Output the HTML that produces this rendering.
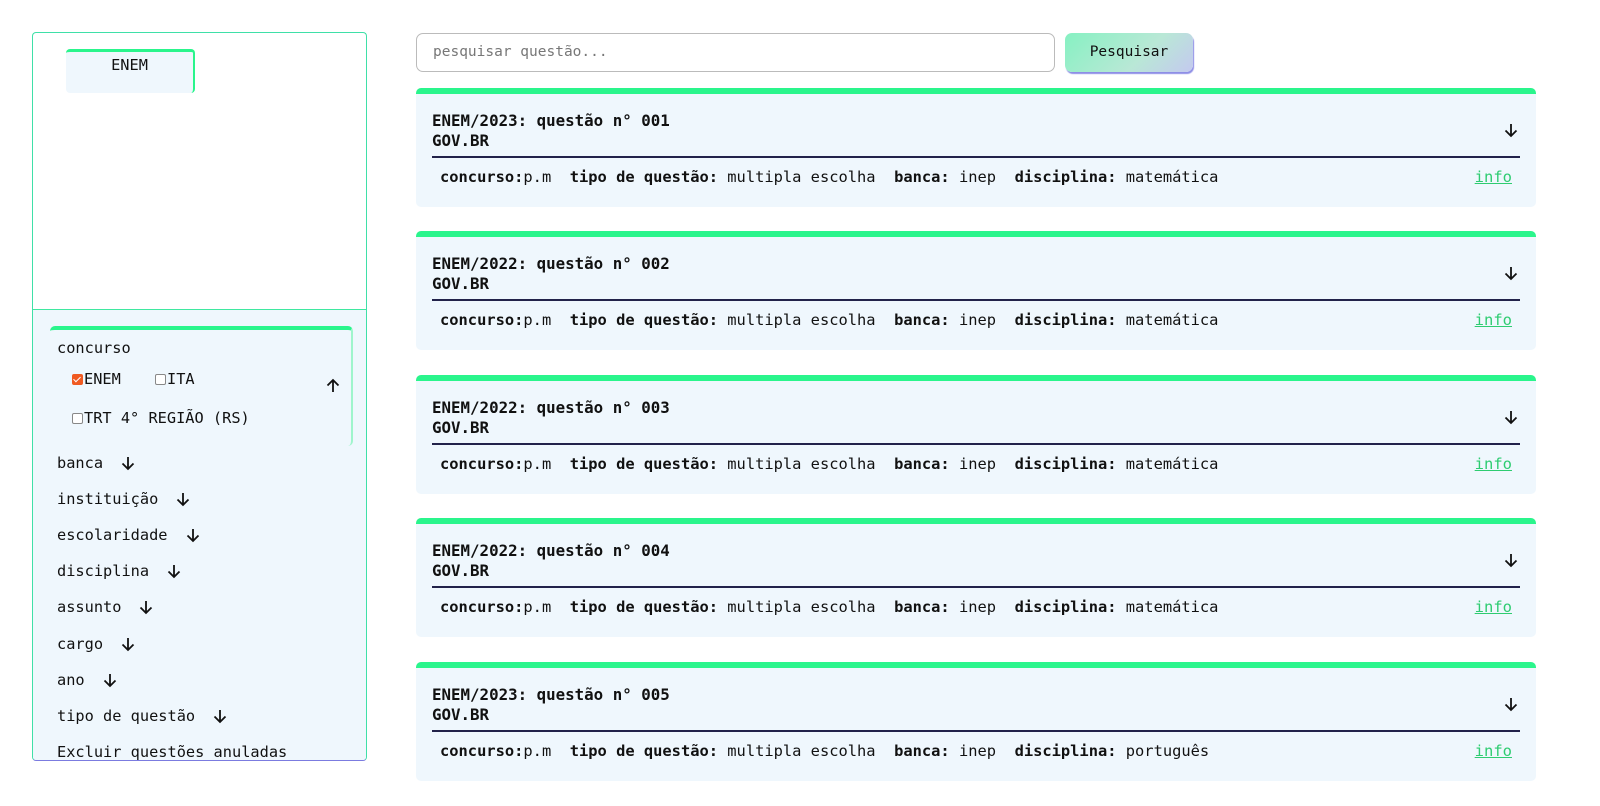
<!DOCTYPE html>
<html><head><meta charset="utf-8">
<style>
*{box-sizing:border-box;margin:0;padding:0}
body{width:1600px;height:806px;background:#fff;font-family:"DejaVu Sans Mono","Liberation Mono",monospace;color:#111;position:relative;overflow:hidden}
.side{position:absolute;left:32px;top:32px;width:335px;height:729px;border:1.5px solid #3fe0a8;border-bottom-color:#7b7be0;border-radius:4px;overflow:hidden}
.side .low{position:absolute;left:0;right:0;top:276px;bottom:0;background:#eff7fd;border-top:1.5px solid #3fe8a0}
.tab{position:absolute;left:33px;top:16px;width:129px;height:44px;background:#eff7fd;border-top:3px solid #2af58c;border-right:2px solid #2af58c;border-radius:4px;font-size:15.3px;text-align:center;padding-top:4px}
.cbox{position:absolute;left:17px;top:16px;width:303px;height:120px;border-top:4px solid #2af58c;border-right:2px solid #9ff5cc;border-radius:5px}
.s{position:absolute;font-size:15.3px;white-space:nowrap;line-height:18px}
.chk{display:inline-block;width:11px;height:11px;border:1.5px solid #888;border-radius:2px;vertical-align:-1px;margin-right:1px;background:#fff}
.chk.on{background:#f05a22;border-color:#f05a22;position:relative}
.chk.on:after{content:"";position:absolute;left:2px;top:0px;width:3px;height:6px;border:solid #fff;border-width:0 1.5px 1.5px 0;transform:rotate(45deg)}
svg.ar{vertical-align:-3px;margin-left:18px}
.search{position:absolute;left:416px;top:33px;width:639px;height:39px;border:1px solid #bbb;border-radius:7px;font-size:14.5px;color:#777;padding:10px 16px}
.btn{position:absolute;left:1065px;top:33px;width:128px;height:39px;border-radius:7px;background:linear-gradient(135deg,#86f1c2,#b9e8d6 60%,#c4c9ef);box-shadow:1px 2px 1px #8e8ee6;font-size:14.5px;text-align:center;line-height:39px;color:#111}
.card{position:absolute;left:416px;width:1120px;height:119px;background:#eff7fd;border-top:6px solid #2af58c;border-radius:5px;font-size:15.8px}
.card .t{position:absolute;left:16px;top:17px;font-weight:bold;line-height:20px;white-space:nowrap}
.card .hr{position:absolute;left:16px;right:16px;top:62px;height:2px;background:#22224a}
.card .m{position:absolute;left:24px;top:73px;white-space:pre;line-height:20px;font-size:15.4px}
.card .m b{font-weight:bold}
.card .info{position:absolute;right:24px;top:73px;color:#2ecc71;text-decoration:underline;line-height:20px;font-size:15.5px}
.card svg{position:absolute;right:18px;top:29px}
</style></head><body>
<div class="side">
  <div class="tab">ENEM</div>
  <div class="low">
    <div class="cbox"></div>
    <div class="s" style="left:24px;top:29px">concurso</div>
    <div class="s" style="left:39px;top:60px"><span class="chk on"></span>ENEM</div>
    <div class="s" style="left:122px;top:60px"><span class="chk"></span>ITA</div>
    <svg style="position:absolute;left:293px;top:68px" width="14" height="15" viewBox="0 0 14 15"><path d="M7 14V2M1.5 7.5L7 2l5.5 5.5" fill="none" stroke="#111" stroke-width="1.8"/></svg>
    <div class="s" style="left:39px;top:99px"><span class="chk"></span>TRT 4° REGIÃO (RS)</div>
    <div class="s" style="left:24px;top:144px">banca<svg class="ar" width="14" height="15" viewBox="0 0 14 15"><path d="M7 1v12M1.5 7.5L7 13l5.5-5.5" fill="none" stroke="#111" stroke-width="1.8"/></svg></div>
    <div class="s" style="left:24px;top:180px">instituição<svg class="ar" width="14" height="15" viewBox="0 0 14 15"><path d="M7 1v12M1.5 7.5L7 13l5.5-5.5" fill="none" stroke="#111" stroke-width="1.8"/></svg></div>
    <div class="s" style="left:24px;top:216px">escolaridade<svg class="ar" width="14" height="15" viewBox="0 0 14 15"><path d="M7 1v12M1.5 7.5L7 13l5.5-5.5" fill="none" stroke="#111" stroke-width="1.8"/></svg></div>
    <div class="s" style="left:24px;top:252px">disciplina<svg class="ar" width="14" height="15" viewBox="0 0 14 15"><path d="M7 1v12M1.5 7.5L7 13l5.5-5.5" fill="none" stroke="#111" stroke-width="1.8"/></svg></div>
    <div class="s" style="left:24px;top:288px">assunto<svg class="ar" width="14" height="15" viewBox="0 0 14 15"><path d="M7 1v12M1.5 7.5L7 13l5.5-5.5" fill="none" stroke="#111" stroke-width="1.8"/></svg></div>
    <div class="s" style="left:24px;top:325px">cargo<svg class="ar" width="14" height="15" viewBox="0 0 14 15"><path d="M7 1v12M1.5 7.5L7 13l5.5-5.5" fill="none" stroke="#111" stroke-width="1.8"/></svg></div>
    <div class="s" style="left:24px;top:361px">ano<svg class="ar" width="14" height="15" viewBox="0 0 14 15"><path d="M7 1v12M1.5 7.5L7 13l5.5-5.5" fill="none" stroke="#111" stroke-width="1.8"/></svg></div>
    <div class="s" style="left:24px;top:397px">tipo de questão<svg class="ar" width="14" height="15" viewBox="0 0 14 15"><path d="M7 1v12M1.5 7.5L7 13l5.5-5.5" fill="none" stroke="#111" stroke-width="1.8"/></svg></div>
    <div class="s" style="left:24px;top:433px">Excluir questões anuladas</div>
  </div>
</div>
<div class="search">pesquisar questão...</div>
<div class="btn">Pesquisar</div>

<div class="card" style="top:88px"><div class="t">ENEM/2023: questão n° 001<br>GOV.BR</div><svg width="14" height="15" viewBox="0 0 14 15"><path d="M7 1v12M1.5 7.5L7 13l5.5-5.5" fill="none" stroke="#111" stroke-width="1.8"/></svg><div class="hr"></div><div class="m"><b>concurso:</b>p.m  <b>tipo de questão:</b> multipla escolha  <b>banca:</b> inep  <b>disciplina:</b> matemática</div><div class="info">info</div></div>
<div class="card" style="top:231px"><div class="t">ENEM/2022: questão n° 002<br>GOV.BR</div><svg width="14" height="15" viewBox="0 0 14 15"><path d="M7 1v12M1.5 7.5L7 13l5.5-5.5" fill="none" stroke="#111" stroke-width="1.8"/></svg><div class="hr"></div><div class="m"><b>concurso:</b>p.m  <b>tipo de questão:</b> multipla escolha  <b>banca:</b> inep  <b>disciplina:</b> matemática</div><div class="info">info</div></div>
<div class="card" style="top:375px"><div class="t">ENEM/2022: questão n° 003<br>GOV.BR</div><svg width="14" height="15" viewBox="0 0 14 15"><path d="M7 1v12M1.5 7.5L7 13l5.5-5.5" fill="none" stroke="#111" stroke-width="1.8"/></svg><div class="hr"></div><div class="m"><b>concurso:</b>p.m  <b>tipo de questão:</b> multipla escolha  <b>banca:</b> inep  <b>disciplina:</b> matemática</div><div class="info">info</div></div>
<div class="card" style="top:518px"><div class="t">ENEM/2022: questão n° 004<br>GOV.BR</div><svg width="14" height="15" viewBox="0 0 14 15"><path d="M7 1v12M1.5 7.5L7 13l5.5-5.5" fill="none" stroke="#111" stroke-width="1.8"/></svg><div class="hr"></div><div class="m"><b>concurso:</b>p.m  <b>tipo de questão:</b> multipla escolha  <b>banca:</b> inep  <b>disciplina:</b> matemática</div><div class="info">info</div></div>
<div class="card" style="top:662px"><div class="t">ENEM/2023: questão n° 005<br>GOV.BR</div><svg width="14" height="15" viewBox="0 0 14 15"><path d="M7 1v12M1.5 7.5L7 13l5.5-5.5" fill="none" stroke="#111" stroke-width="1.8"/></svg><div class="hr"></div><div class="m"><b>concurso:</b>p.m  <b>tipo de questão:</b> multipla escolha  <b>banca:</b> inep  <b>disciplina:</b> português</div><div class="info">info</div></div>
</body></html>
